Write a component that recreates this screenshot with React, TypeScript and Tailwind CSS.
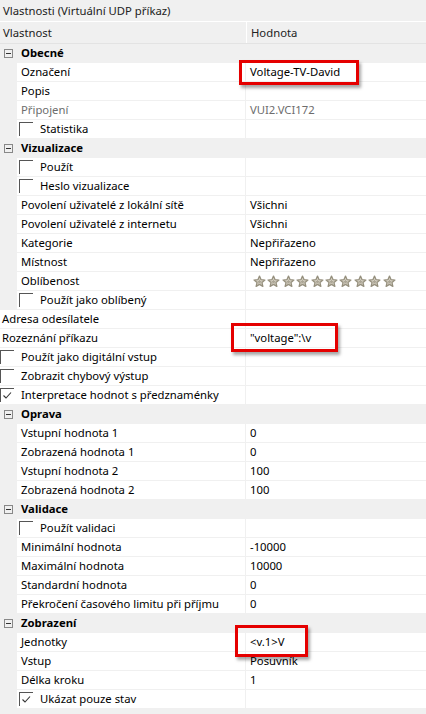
type Row =
  | { kind: 'cat'; label: string }
  | {
      kind: 'item'
      label: string
      value?: string
      top?: boolean
      check?: boolean
      checked?: boolean
      muted?: boolean
      stars?: boolean
    }

const rows: Row[] = [
  { kind: 'cat', label: 'Obecné' },
  { kind: 'item', label: 'Označení', value: 'Voltage-TV-David' },
  { kind: 'item', label: 'Popis' },
  { kind: 'item', label: 'Připojení', value: 'VUI2.VCI172', muted: true },
  { kind: 'item', label: 'Statistika', check: true },
  { kind: 'cat', label: 'Vizualizace' },
  { kind: 'item', label: 'Použít', check: true },
  { kind: 'item', label: 'Heslo vizualizace', check: true },
  { kind: 'item', label: 'Povolení uživatelé z lokální sítě', value: 'Všichni' },
  { kind: 'item', label: 'Povolení uživatelé z internetu', value: 'Všichni' },
  { kind: 'item', label: 'Kategorie', value: 'Nepřiřazeno' },
  { kind: 'item', label: 'Místnost', value: 'Nepřiřazeno' },
  { kind: 'item', label: 'Oblíbenost', stars: true },
  { kind: 'item', label: 'Použít jako oblíbený', check: true },
  { kind: 'item', label: 'Adresa odesílatele', top: true },
  { kind: 'item', label: 'Rozeznání příkazu', value: '"voltage":\\v', top: true },
  { kind: 'item', label: 'Použít jako digitální vstup', top: true, check: true },
  { kind: 'item', label: 'Zobrazit chybový výstup', top: true, check: true },
  { kind: 'item', label: 'Interpretace hodnot s předznaménky', top: true, check: true, checked: true },
  { kind: 'cat', label: 'Oprava' },
  { kind: 'item', label: 'Vstupní hodnota 1', value: '0' },
  { kind: 'item', label: 'Zobrazená hodnota 1', value: '0' },
  { kind: 'item', label: 'Vstupní hodnota 2', value: '100' },
  { kind: 'item', label: 'Zobrazená hodnota 2', value: '100' },
  { kind: 'cat', label: 'Validace' },
  { kind: 'item', label: 'Použít validaci', check: true },
  { kind: 'item', label: 'Minimální hodnota', value: '-10000' },
  { kind: 'item', label: 'Maximální hodnota', value: '10000' },
  { kind: 'item', label: 'Standardní hodnota', value: '0' },
  { kind: 'item', label: 'Překročení časového limitu při příjmu', value: '0' },
  { kind: 'cat', label: 'Zobrazení' },
  { kind: 'item', label: 'Jednotky', value: '<v.1>V' },
  { kind: 'item', label: 'Vstup', value: 'Posuvník' },
  { kind: 'item', label: 'Délka kroku', value: '1' },
  { kind: 'item', label: 'Ukázat pouze stav', check: true, checked: true },
]

function Minus() {
  return (
    <div className="ml-[4px] flex h-[9px] w-[9px] items-center justify-center border border-[#888]">
      <div className="h-px w-[5px] bg-[#333]" />
    </div>
  )
}

function CheckBox({ checked }: { checked?: boolean }) {
  return (
    <div className="mt-[2px] h-[14px] w-[14px] shrink-0 border-l border-t border-[#555]">
      {checked && (
        <svg width="13" height="13" viewBox="0 0 13 13">
          <path d="M2.5 6.5 L5 9 L10 3.5" fill="none" stroke="#333" strokeWidth="1.1" />
        </svg>
      )}
    </div>
  )
}

function Star() {
  return (
    <svg width="13" height="13" viewBox="0 0 24 24">
      <path
        d="M12 2 L14.9 8.6 L22 9.3 L16.6 14 L18.2 21 L12 17.3 L5.8 21 L7.4 14 L2 9.3 L9.1 8.6 Z"
        fill="#dcd7ca"
        stroke="#958f7d"
        strokeWidth="2.4"
        strokeLinejoin="round"
      />
      <path d="M12 8 L13.3 11 L16.5 11.3 L14 13.4 L14.8 16.6 L12 14.9 L9.2 16.6 L10 13.4 L7.5 11.3 L10.7 11 Z" fill="#aca696" />
    </svg>
  )
}

function Highlight({ className }: { className: string }) {
  return (
    <div
      className={`pointer-events-none absolute border-[3px] border-[#e50000] shadow-[2px_3px_3px_rgba(0,0,0,0.35)] ${className}`}
    />
  )
}

export default function App() {
  return (
    <div className="relative h-[714px] w-[426px] overflow-hidden bg-[#f0f0f0] font-['Segoe_UI','Noto_Sans',sans-serif] text-[11.3px] text-black">
      {/* Title */}
      <div className="h-[22px] border-b border-white px-[3px] leading-[21px] text-[#222]">
        Vlastnosti (Virtuální UDP příkaz)
      </div>

      {/* Column header */}
      <div className="flex h-[22px] border-b border-[#e3e3e3] leading-[21px] text-[#222]">
        <div className="w-[247px] border-r border-white px-[3px]">Vlastnost</div>
        <div className="flex-1 px-[4px]">Hodnota</div>
      </div>

      {/* Grid */}
      <div>
        {rows.map((r, i) => {
          if (r.kind === 'cat') {
            return (
              <div key={i} className="flex h-[19px] items-center bg-[#f0f0f0]">
                <Minus />
                <span className="ml-[8px] font-bold">{r.label}</span>
              </div>
            )
          }
          return (
            <div key={i} className="flex h-[19px]">
              {!r.top && <div className="w-[17px] shrink-0 bg-[#f0f0f0]" />}
              <div className="flex flex-1 border-b border-[#f0f0f0] bg-white">
                <div
                  className={`flex shrink-0 border-r border-[#f0f0f0] ${r.top ? 'w-[246px]' : 'w-[229px]'}`}
                >
                  {r.check ? (
                    <>
                      <div className={r.top ? 'ml-0' : 'ml-[2px]'}>
                        <CheckBox checked={r.checked} />
                      </div>
                      <span className="ml-[7px] leading-[18px]">{r.label}</span>
                    </>
                  ) : (
                    <span
                      className={`leading-[18px] ${r.top ? 'ml-[2px]' : 'ml-[4px]'} ${r.muted ? 'text-[#6d6d6d]' : ''}`}
                    >
                      {r.label}
                    </span>
                  )}
                </div>
                <div className={`flex-1 pl-[4px] leading-[18px] ${r.muted ? 'text-[#6d6d6d]' : ''}`}>
                  {r.stars ? (
                    <div className="ml-[3px] mt-[3px] flex gap-[1.4px]">
                      {Array.from({ length: 10 }).map((_, s) => (
                        <Star key={s} />
                      ))}
                    </div>
                  ) : (
                    r.value
                  )}
                </div>
              </div>
            </div>
          )
        })}
      </div>

      {/* Red highlight frames */}
      <Highlight className="left-[239px] top-[60px] h-[25px] w-[120px]" />
      <Highlight className="left-[231px] top-[323px] h-[29px] w-[107px]" />
      <Highlight className="left-[235px] top-[625px] h-[32px] w-[73px]" />
    </div>
  )
}
